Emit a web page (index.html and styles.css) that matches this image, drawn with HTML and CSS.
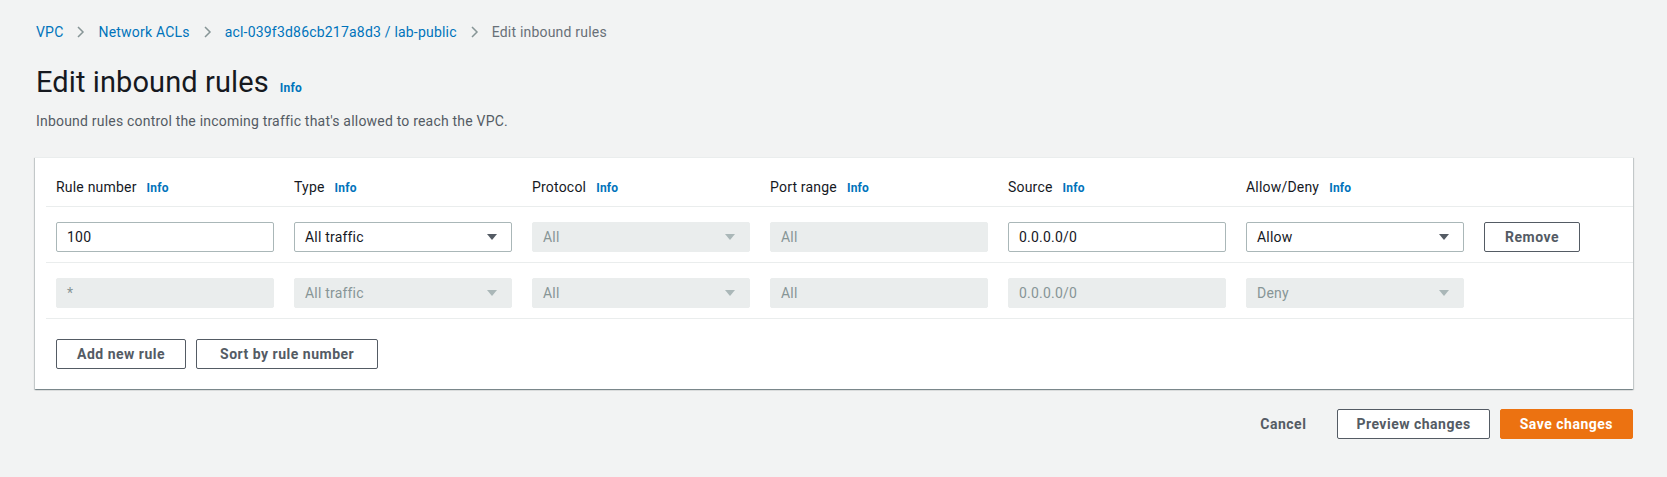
FILE: index.html
```html
<!DOCTYPE html>
<html lang="en">
<head>
<meta charset="utf-8">
<title>Edit inbound rules</title>
<link rel="stylesheet" href="styles.css">
</head>
<body>
<div class="page">
  <nav class="breadcrumbs">
    <a class="crumb" href="#">VPC</a>
    <svg class="chev" width="10" height="12" viewBox="0 0 10 12"><path d="M2 1l5 5-5 5" fill="none" stroke="#879596" stroke-width="1.5"/></svg>
    <a class="crumb" href="#">Network ACLs</a>
    <svg class="chev" width="10" height="12" viewBox="0 0 10 12"><path d="M2 1l5 5-5 5" fill="none" stroke="#879596" stroke-width="1.5"/></svg>
    <a class="crumb" href="#">acl-039f3d86cb217a8d3 / lab-public</a>
    <svg class="chev" width="10" height="12" viewBox="0 0 10 12"><path d="M2 1l5 5-5 5" fill="none" stroke="#879596" stroke-width="1.5"/></svg>
    <span class="crumb current">Edit inbound rules</span>
  </nav>

  <h1 class="title">Edit inbound rules <a class="info" href="#">Info</a></h1>
  <p class="desc">Inbound rules control the incoming traffic that's allowed to reach the VPC.</p>

  <section class="card">
    <div class="row head">
      <div class="label">Rule number <a class="info" href="#">Info</a></div>
      <div class="label">Type <a class="info" href="#">Info</a></div>
      <div class="label">Protocol <a class="info" href="#">Info</a></div>
      <div class="label">Port range <a class="info" href="#">Info</a></div>
      <div class="label">Source <a class="info" href="#">Info</a></div>
      <div class="label">Allow/Deny <a class="info" href="#">Info</a></div>
      <div></div>
    </div>

    <div class="row">
      <div class="field">100</div>
      <div class="field select">All traffic<svg class="caret" width="12" height="8" viewBox="0 0 12 8"><path d="M1 1h10L6 7z"/></svg></div>
      <div class="field select disabled">All<svg class="caret" width="12" height="8" viewBox="0 0 12 8"><path d="M1 1h10L6 7z"/></svg></div>
      <div class="field disabled">All</div>
      <div class="field">0.0.0.0/0</div>
      <div class="field select">Allow<svg class="caret" width="12" height="8" viewBox="0 0 12 8"><path d="M1 1h10L6 7z"/></svg></div>
      <button class="btn remove">Remove</button>
    </div>

    <div class="row">
      <div class="field disabled">*</div>
      <div class="field select disabled">All traffic<svg class="caret" width="12" height="8" viewBox="0 0 12 8"><path d="M1 1h10L6 7z"/></svg></div>
      <div class="field select disabled">All<svg class="caret" width="12" height="8" viewBox="0 0 12 8"><path d="M1 1h10L6 7z"/></svg></div>
      <div class="field disabled">All</div>
      <div class="field disabled">0.0.0.0/0</div>
      <div class="field select disabled">Deny<svg class="caret" width="12" height="8" viewBox="0 0 12 8"><path d="M1 1h10L6 7z"/></svg></div>
      <div></div>
    </div>

    <div class="card-foot">
      <button class="btn">Add new rule</button>
      <button class="btn wide">Sort by rule number</button>
    </div>
  </section>

  <div class="actions">
    <button class="btn link">Cancel</button>
    <button class="btn snug">Preview changes</button>
    <button class="btn primary">Save changes</button>
  </div>
</div>
</body>
</html>
```

FILE: styles.css
```css
* { box-sizing: border-box; }

html, body {
  margin: 0;
  background: #f2f3f3;
}

body {
  font-family: Roboto, "Liberation Sans", Arial, sans-serif;
  font-size: 14px;
  line-height: 20px;
  letter-spacing: 0.2px;
  color: #16191f;
}

.page {
  padding: 22px 34px 0 35px;
}

a { text-decoration: none; }

.breadcrumbs {
  display: flex;
  align-items: center;
  height: 20px;
  padding-left: 1px;
}

.crumb {
  color: #0073bb;
  white-space: nowrap;
}

.crumb.current {
  color: #687078;
}

.chev {
  margin: 0 12px 0 13px;
  flex: none;
}

.title {
  margin: 22px 0 0 1px;
  font-size: 29px;
  line-height: 36px;
  font-weight: 400;
  letter-spacing: 0.1px;
  color: #16191f;
  display: flex;
  align-items: baseline;
  gap: 11px;
}

.info {
  color: #0073bb;
  font-size: 12px;
  font-weight: 700;
  line-height: 16px;
  letter-spacing: 0.2px;
}

.desc {
  margin: 11px 0 0 1px;
  color: #545b64;
}

.card {
  margin-top: 26px;
  background: #fff;
  box-shadow: 0 1px 1px 0 rgba(0, 28, 36, 0.3), 1px 1px 1px 0 rgba(0, 28, 36, 0.15), -1px 1px 1px 0 rgba(0, 28, 36, 0.15);
  border-top: 1px solid #eaeded;
}

.row {
  display: grid;
  grid-template-columns: repeat(6, 218px) 96px;
  column-gap: 20px;
  margin-left: 11px;
  padding: 15px 0 10px 10px;
  border-bottom: 1px solid #eaeded;
  align-items: center;
}

.row.head {
  padding: 19px 0 9px 10px;
}

.label {
  display: flex;
  align-items: baseline;
  gap: 10px;
  white-space: nowrap;
}

.field {
  position: relative;
  height: 30px;
  border: 1px solid #aab7b8;
  border-radius: 2px;
  padding: 0 10px;
  line-height: 28px;
  background: #fff;
  color: #16191f;
  white-space: nowrap;
}

.field.disabled {
  background: #eaeded;
  border-color: #eaeded;
  color: #879596;
}

.caret {
  position: absolute;
  right: 13px;
  top: 10px;
  fill: #545b64;
}

.disabled .caret {
  fill: #aab7b8;
}

.btn {
  height: 30px;
  padding: 0 20px;
  border: 1px solid #545b64;
  border-radius: 2px;
  background: #fff;
  color: #545b64;
  font-family: inherit;
  font-size: 14px;
  font-weight: 700;
  line-height: 28px;
  letter-spacing: 0.5px;
  white-space: nowrap;
  cursor: pointer;
}

.btn.wide {
  padding: 0 23px;
}

.btn.snug {
  padding: 0 18px;
}

.btn.remove {
  width: 96px;
  padding: 0;
}

.card-foot {
  display: flex;
  gap: 10px;
  padding: 20px 0 20px 21px;
}

.actions {
  display: flex;
  justify-content: flex-end;
  gap: 10px;
  margin-top: 20px;
}

.btn.link {
  border-color: transparent;
  background: transparent;
  padding: 0 20px;
}

.btn.primary {
  background: #ec7211;
  border-color: #ec7211;
  color: #fff;
  padding: 0 19px;
}
```
